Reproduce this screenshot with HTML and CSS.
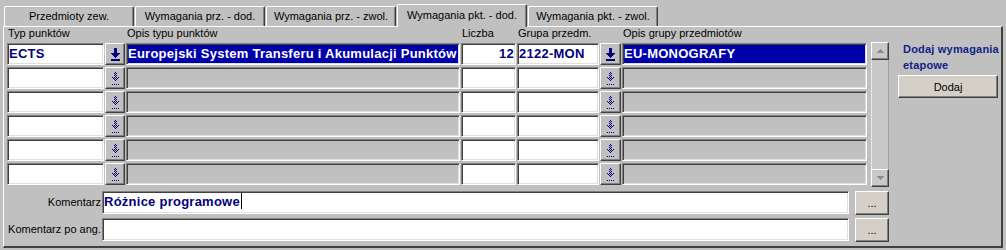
FILE: index.html
```html
<!DOCTYPE html>
<html lang="pl">
<head>
  <meta charset="UTF-8">
  <title>Wymagania pkt. - dod.</title>
  <link rel="stylesheet" href="styles.css">
</head>
<body>
  <svg class="defs" width="0" height="0">
    <defs>
      <pattern id="dither" width="2" height="2" patternUnits="userSpaceOnUse">
        <rect width="1" height="1" fill="#000080"/>
        <rect x="1" y="1" width="1" height="1" fill="#000080"/>
      </pattern>
      <symbol id="arrow-on" viewBox="0 0 9 13">
        <rect x="3" y="0" width="3" height="6" fill="#000080"/>
        <path d="M0 5h9v1h-1v1h-1v1h-1v1h-1v1h-1v-1h-1v-1h-1v-1h-1v-1h-1z" fill="#000080"/>
        <rect x="0" y="11" width="9" height="2" fill="#000080"/>
      </symbol>
      <symbol id="arrow-off" viewBox="0 0 9 13">
        <rect x="3" y="0" width="3" height="6" fill="url(#dither)"/>
        <path d="M1 5h7v1h-1v1h-1v1h-1v1h-1v-1h-1v-1h-1v-1h-1z" fill="url(#dither)"/>
        <path d="M1 12h1v1h-1zM3 12h1v1h-1zM5 12h1v1h-1zM7 12h1v1h-1z" fill="#000080"/>
      </symbol>
    </defs>
  </svg>

  <div class="tabs">
    <div class="tab">Przedmioty zew.</div>
    <div class="tab">Wymagania prz. - dod.</div>
    <div class="tab">Wymagania prz. - zwol.</div>
    <div class="tab active">Wymagania pkt. - dod.</div>
    <div class="tab">Wymagania pkt. - zwol.</div>
  </div>

  <div class="panel">
    <div class="main">
      <div class="table">
        <div class="grid">
          <span class="lbl">Typ punktów</span>
          <span></span>
          <span class="lbl">Opis typu punktów</span>
          <span class="lbl">Liczba</span>
          <span class="lbl">Grupa przedm.</span>
          <span></span>
          <span class="lbl">Opis grupy przedmiotów</span>

          <div class="cell in">ECTS</div>
          <div class="pick"><svg><use href="#arrow-on"/></svg></div>
          <div class="cell sel">Europejski System Transferu i Akumulacji Punktów</div>
          <div class="cell in num">12</div>
          <div class="cell in">2122-MON</div>
          <div class="pick"><svg><use href="#arrow-on"/></svg></div>
          <div class="cell sel">EU-MONOGRAFY</div>

          <div class="cell in"></div>
          <div class="pick"><svg><use href="#arrow-off"/></svg></div>
          <div class="cell ro"></div>
          <div class="cell in"></div>
          <div class="cell in"></div>
          <div class="pick"><svg><use href="#arrow-off"/></svg></div>
          <div class="cell ro"></div>

          <div class="cell in"></div>
          <div class="pick"><svg><use href="#arrow-off"/></svg></div>
          <div class="cell ro"></div>
          <div class="cell in"></div>
          <div class="cell in"></div>
          <div class="pick"><svg><use href="#arrow-off"/></svg></div>
          <div class="cell ro"></div>

          <div class="cell in"></div>
          <div class="pick"><svg><use href="#arrow-off"/></svg></div>
          <div class="cell ro"></div>
          <div class="cell in"></div>
          <div class="cell in"></div>
          <div class="pick"><svg><use href="#arrow-off"/></svg></div>
          <div class="cell ro"></div>

          <div class="cell in"></div>
          <div class="pick"><svg><use href="#arrow-off"/></svg></div>
          <div class="cell ro"></div>
          <div class="cell in"></div>
          <div class="cell in"></div>
          <div class="pick"><svg><use href="#arrow-off"/></svg></div>
          <div class="cell ro"></div>

          <div class="cell in"></div>
          <div class="pick"><svg><use href="#arrow-off"/></svg></div>
          <div class="cell ro"></div>
          <div class="cell in"></div>
          <div class="cell in"></div>
          <div class="pick"><svg><use href="#arrow-off"/></svg></div>
          <div class="cell ro"></div>
        </div>

        <div class="scroll">
          <div class="sbtn"><svg width="7" height="4"><path d="M3 0h1v1h1v1h1v1h1v1h-7v-1h1v-1h1v-1h1z" fill="#8a8a8a"/></svg></div>
          <div class="track"></div>
          <div class="sbtn"><svg width="7" height="4"><path d="M0 0h7v1h-1v1h-1v1h-1v1h-1v-1h-1v-1h-1v-1h-1z" fill="#8a8a8a"/></svg></div>
        </div>
      </div>

      <div class="comments">
        <label>Komentarz</label>
        <div class="cell in wide">Różnice programowe<span class="caret"></span></div>
        <button class="more">...</button>
        <label>Komentarz po ang.</label>
        <div class="cell in wide"></div>
        <button class="more">...</button>
      </div>
    </div>

    <div class="side">
      <div class="side-title">Dodaj wymagania<br>etapowe</div>
      <button class="add">Dodaj</button>
    </div>
  </div>
</body>
</html>
```

FILE: styles.css
```css
* {
  margin: 0;
  padding: 0;
  box-sizing: border-box;
}

body {
  width: 1006px;
  height: 250px;
  overflow: hidden;
  background-color: #c0c0c0;
  font-family: 'Liberation Sans', Arial, sans-serif;
  font-size: 11px;
  color: #000;
}

.defs {
  position: absolute;
}

/* Tabs */
.tabs {
  display: flex;
  align-items: flex-end;
  gap: 1px;
  height: 26px;
  padding-left: 4px;
}

.tab {
  width: 130px;
  height: 20px;
  line-height: 18px;
  text-align: center;
  background-color: #c0c0c0;
  border-top: 1px solid #fff;
  border-left: 1px solid #fff;
  border-right: 1px solid #404040;
  box-shadow: inset -1px 0 0 #808080;
  border-radius: 2px 2px 0 0;
}

.tab.active {
  height: 23px;
  line-height: 20px;
  margin-bottom: -1px;
  position: relative;
  z-index: 1;
}

/* Panel */
.panel {
  display: flex;
  width: 1000px;
  height: 222px;
  margin-left: 3px;
  border-top: 1px solid #fff;
  border-left: 1px solid #fff;
  border-right: 2px solid #404040;
  border-bottom: 2px solid #404040;
}

.main {
  display: flex;
  flex-direction: column;
}

.table {
  display: flex;
  padding-left: 3px;
}

.grid {
  display: grid;
  grid-template-columns: 97px 20px 334px 55px 82px 21px 245px;
  grid-template-rows: 14px repeat(6, 22px);
  column-gap: 1px;
  row-gap: 2px;
}

.lbl {
  padding-left: 1px;
  line-height: 13px;
  white-space: nowrap;
}

.cell {
  height: 22px;
  padding-left: 1px;
  line-height: 19px;
  font-family: 'Liberation Sans', Arial, sans-serif;
  font-size: 13px;
  font-weight: bold;
  letter-spacing: 0.25px;
  color: #000080;
  white-space: nowrap;
  overflow: hidden;
  border-top: 1px solid #808080;
  border-left: 1px solid #808080;
  border-bottom: 1px solid #fff;
  border-right: 1px solid #fff;
  box-shadow: inset 1px 1px 0 #404040, inset -1px -1px 0 #dfdfdf;
}

.cell.in {
  background-color: #fff;
}

.cell.ro {
  background-color: #c0c0c0;
}

.cell.sel {
  background-color: #0000a8;
  color: #fff;
}

.cell.num {
  text-align: right;
  padding-right: 1px;
}

.pick {
  display: flex;
  align-items: center;
  justify-content: center;
  height: 22px;
  background-color: #c0c0c0;
  border-top: 1px solid #fff;
  border-left: 1px solid #fff;
  border-right: 1px solid #404040;
  border-bottom: 1px solid #404040;
  box-shadow: inset -1px -1px 0 #808080;
}

.pick svg {
  width: 9px;
  height: 13px;
  margin-top: 1px;
}

/* Scrollbar */
.scroll {
  display: flex;
  flex-direction: column;
  width: 18px;
  height: 145px;
  margin-top: 15px;
  margin-left: 4px;
  background-color: #c8c8c8;
  border-left: 1px solid #e8e8e8;
  border-right: 1px solid #a0a0a0;
}

.track {
  flex: 1;
}

.sbtn {
  display: flex;
  align-items: center;
  justify-content: center;
  height: 18px;
  margin: 0 -1px;
  background-color: #c8c8c8;
  border-top: 1px solid #fff;
  border-left: 1px solid #fff;
  border-right: 1px solid #404040;
  border-bottom: 1px solid #404040;
  box-shadow: inset -1px -1px 0 #808080;
}

/* Comments */
.comments {
  display: grid;
  grid-template-columns: 98px 747px 34px;
  grid-template-rows: 23px 23px;
  column-gap: 0;
  row-gap: 4px;
  margin-top: 4px;
}

.comments label {
  text-align: right;
  padding-right: 1px;
  line-height: 23px;
}

.cell.wide {
  height: 23px;
  line-height: 20px;
}

.caret {
  display: inline-block;
  width: 1px;
  height: 16px;
  margin-left: 1px;
  vertical-align: -3px;
  background-color: #000;
}

.more,
.add {
  font-family: 'Liberation Sans', Arial, sans-serif;
  font-size: 11px;
  color: #000;
  background-color: #d4d0c8;
  border-top: 1px solid #fff;
  border-left: 1px solid #fff;
  border-right: 1px solid #404040;
  border-bottom: 1px solid #404040;
  box-shadow: inset -1px -1px 0 #808080;
}

.more {
  height: 24px;
  margin-left: 6px;
  width: 34px;
}

/* Right side */
.side {
  display: flex;
  flex-direction: column;
  margin-left: 9px;
  padding-top: 14px;
}

.side-title {
  padding-left: 5px;
  font-family: 'Liberation Sans', Arial, sans-serif;
  font-size: 11px;
  font-weight: bold;
  letter-spacing: 0.2px;
  line-height: 16px;
  color: #10208c;
  white-space: nowrap;
}

.add {
  width: 100px;
  height: 23px;
  margin-top: 2px;
}
```
